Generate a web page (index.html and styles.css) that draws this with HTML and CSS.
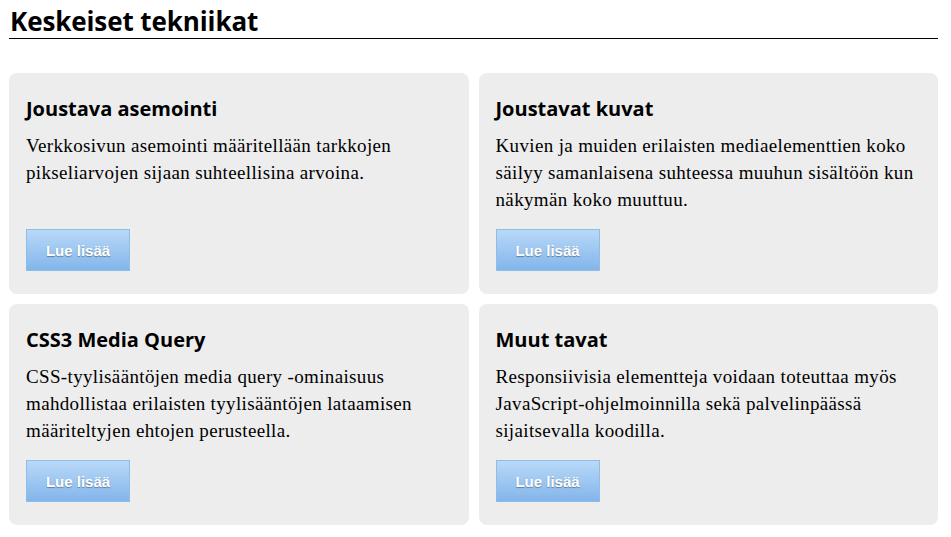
FILE: index.html
```html
<!DOCTYPE html>
<html lang="fi">

<head>
    <meta charset="utf-8">
    <title>Keskeiset tekniikat</title>
    <link rel="stylesheet" href="styles.css">
</head>

<body>
    <div id="page">
        <h1>Keskeiset tekniikat</h1>

        <div class="card-grid">
            <div class="card">
                <h2>Joustava asemointi</h2>
                <p>Verkkosivun asemointi määritellään tarkkojen pikseliarvojen sijaan suhteellisina arvoina.</p>
                <button type="button">Lue lisää</button>
            </div>

            <div class="card">
                <h2>Joustavat kuvat</h2>
                <p>Kuvien ja muiden erilaisten mediaelementtien koko säilyy samanlaisena suhteessa muuhun sisältöön kun näkymän koko muuttuu.</p>
                <button type="button">Lue lisää</button>
            </div>

            <div class="card">
                <h2>CSS3 Media Query</h2>
                <p>CSS-tyylisääntöjen media query -ominaisuus mahdollistaa erilaisten tyylisääntöjen lataamisen määriteltyjen ehtojen perusteella.</p>
                <button type="button">Lue lisää</button>
            </div>

            <div class="card">
                <h2>Muut tavat</h2>
                <p>Responsiivisia elementteja voidaan toteuttaa myös JavaScript-ohjelmoinnilla sekä palvelinpäässä sijaitsevalla koodilla.</p>
                <button type="button">Lue lisää</button>
            </div>
        </div>
    </div>
</body>

</html>
```

FILE: styles.css
```css
body {
    margin: 0;
    background: #fff;
    color: #000;
    font-family: 'Liberation Serif', 'Times New Roman', serif;
}

#page {
    width: 929px;
    padding: 0 13px 14px 9px;
}

h1 {
    margin: 0 0 34px;
    padding: 5px 0 0 1px;
    font-family: 'Open Sans', sans-serif;
    font-size: 26px;
    font-weight: 700;
    line-height: 33px;
    letter-spacing: -0.1px;
    border-bottom: 1px solid #000;
}

.card-grid {
    display: grid;
    grid-template-columns: 1fr 1fr;
    gap: 10px;
}

.card {
    display: flex;
    flex-direction: column;
    align-items: flex-start;
    background-color: #ededed;
    border-radius: 8px;
    padding: 22px 18px 23px 17px;
}

h2 {
    margin: 0 0 9px;
    font-family: 'Open Sans', sans-serif;
    font-size: 20px;
    font-weight: 700;
    line-height: 28px;
}

p {
    margin: 0 0 16px;
    font-size: 19px;
    line-height: 27px;
    letter-spacing: 0.35px;
}

button {
    margin-top: auto;
    width: 104px;
    height: 42px;
    border: 1px solid #8fbde9;
    border-radius: 0;
    background: linear-gradient(#b9d9f8, #83b5eb);
    color: #fff;
    font-family: 'Liberation Sans', Arial, sans-serif;
    font-size: 15px;
    font-weight: 700;
    text-shadow: 0 1px 1px rgba(0, 0, 0, 0.35);
    cursor: pointer;
}
```
